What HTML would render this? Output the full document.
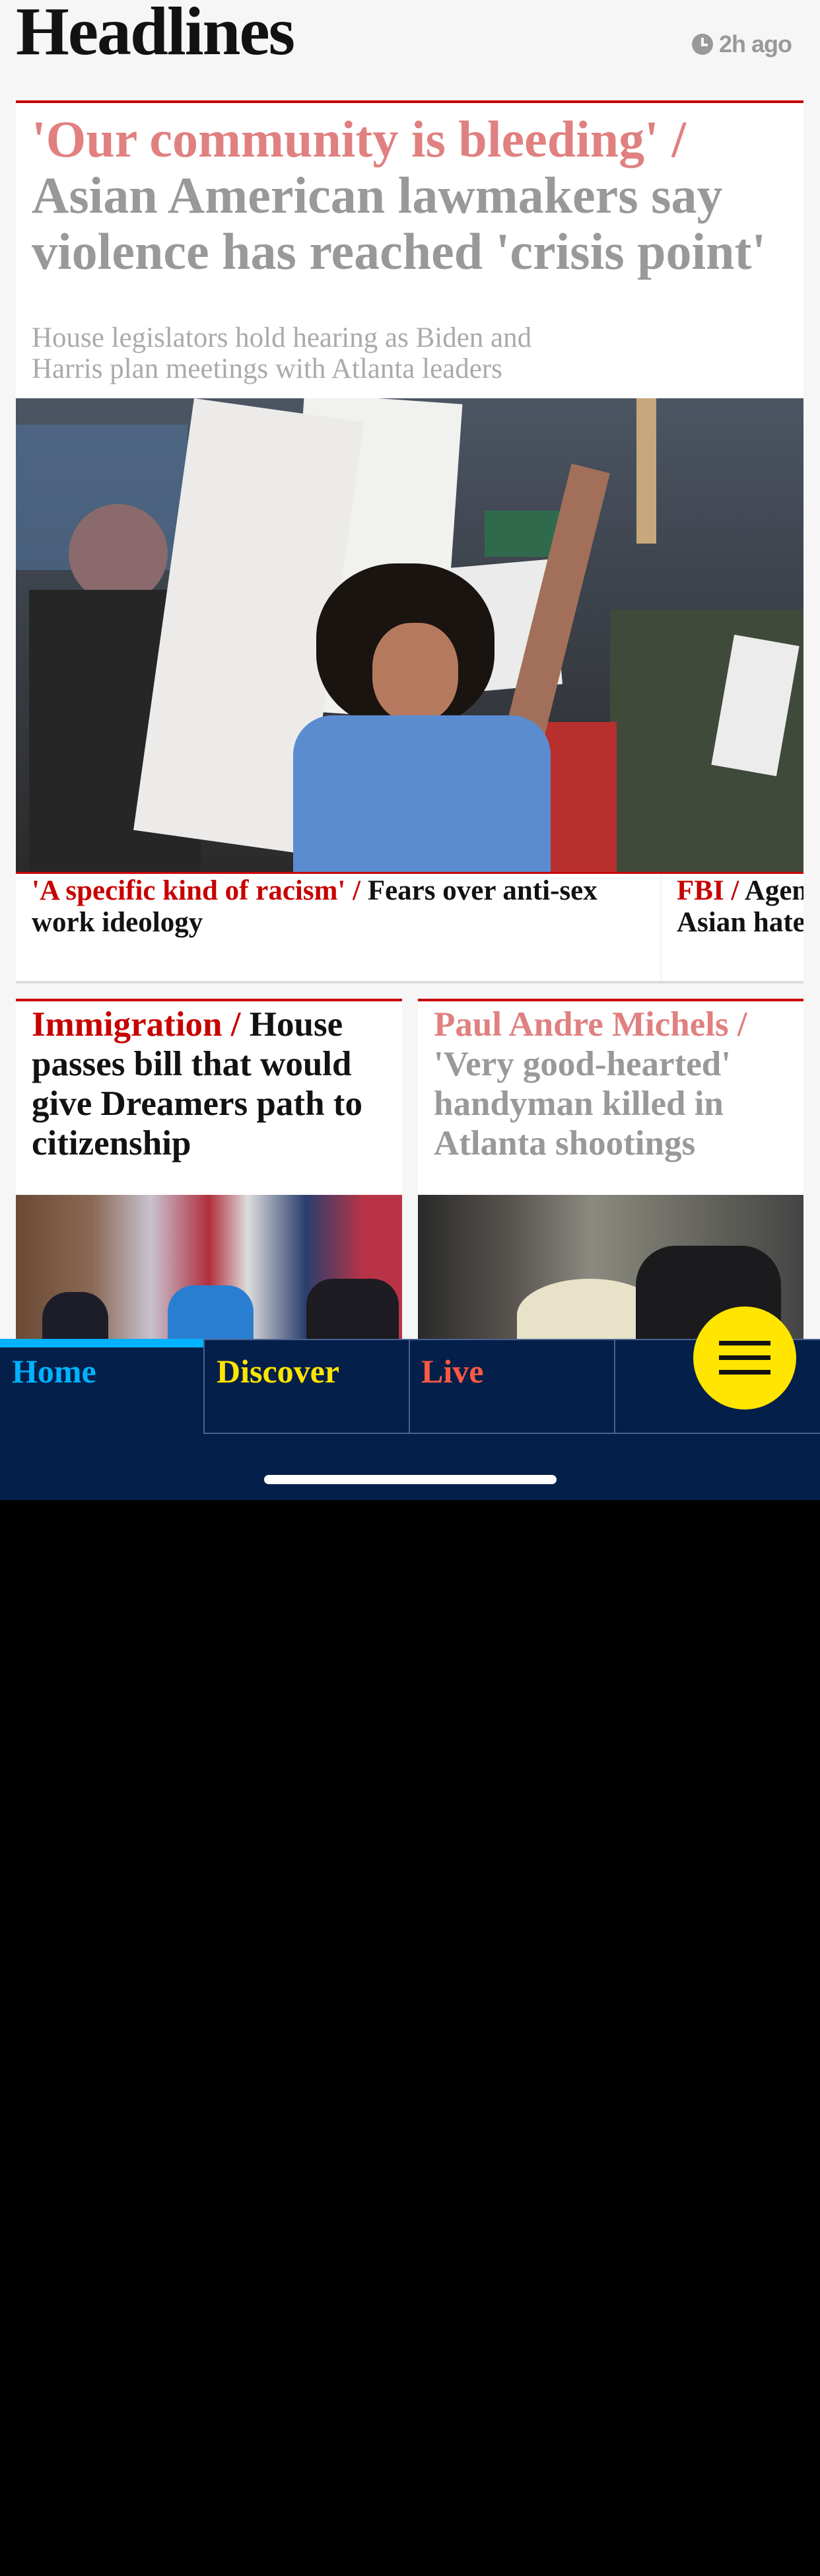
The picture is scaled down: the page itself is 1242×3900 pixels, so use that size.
<!DOCTYPE html>
<html><head><meta charset="utf-8"><style>
*{margin:0;padding:0;box-sizing:border-box}
html,body{width:1242px;height:3900px;background:#000;overflow:hidden}
#app{position:absolute;left:0;top:0;width:1242px;height:2271px;background:#f6f6f6;overflow:hidden;font-family:"Liberation Serif",serif}
.abs{position:absolute}
h1{position:absolute;left:24px;top:-12px;font-size:104px;font-weight:bold;color:#121212;letter-spacing:-2px}
.time{position:absolute;left:1047px;top:46px;font-family:"Liberation Sans",sans-serif;font-weight:bold;font-size:36px;color:#999;letter-spacing:-1px}
.card{position:absolute;background:#fff;border-top:4px solid #c70000;overflow:hidden}
.hl{font-weight:bold;white-space:nowrap}
</style></head><body>
<div id="app">
<h1>Headlines</h1>
<div class="time"><svg width="34" height="34" viewBox="0 0 34 34" style="vertical-align:-5px;margin-right:8px"><circle cx="17" cy="17" r="16" fill="#999"/><path d="M17 7v11h8" stroke="#f6f6f6" stroke-width="4" fill="none"/></svg>2h ago</div>

<div class="card" style="left:24px;top:152px;width:1193px;height:460px">
 <div class="hl" style="position:absolute;left:24px;top:12px;font-size:78px;line-height:85px;color:#999">
  <span style="color:#e08080">'Our community is bleeding' /</span><br>Asian American lawmakers say<br>violence has reached 'crisis point'</div>
 <div style="position:absolute;left:24px;top:332px;font-size:43px;line-height:47px;color:#aaa;white-space:nowrap">House legislators hold hearing as Biden and<br>Harris plan meetings with Atlanta leaders</div>
</div>

<!-- main image -->
<div class="abs" style="left:24px;top:603px;width:1193px;height:718px;overflow:hidden;background:linear-gradient(180deg,#4c5563 0%,#3d434c 40%,#2a2a2a 100%)">
 <div class="abs" style="left:0;top:40px;width:260px;height:220px;background:#50739a;opacity:.6"></div>
 <div class="abs" style="left:900px;top:320px;width:300px;height:400px;background:#3f4a3a"></div>
 <div class="abs" style="left:80px;top:160px;width:150px;height:150px;border-radius:50%;background:#8a6a6c"></div>
 <div class="abs" style="left:20px;top:290px;width:260px;height:430px;background:#262626"></div>
 <div class="abs" style="left:420px;top:0;width:240px;height:480px;background:#f1f1ef;transform:rotate(4deg)"></div>
 <div class="abs" style="top:0;width:260px;height:660px;background:#ecebea;transform:rotate(8deg);transform-origin:top left;left:270px"></div>
 <div class="abs" style="left:660px;top:250px;width:160px;height:190px;background:#ebebeb;transform:rotate(-5deg)"></div>
 <div class="abs" style="left:710px;top:170px;width:140px;height:70px;background:#2f6a4c"></div>
 <div class="abs" style="left:1070px;top:365px;width:100px;height:200px;background:#ececec;transform:rotate(10deg)"></div>
 <div class="abs" style="left:760px;top:490px;width:150px;height:230px;background:#b8302e"></div>
 <div class="abs" style="left:455px;top:250px;width:270px;height:250px;border-radius:45%;background:#1a1411"></div>
 <div class="abs" style="left:540px;top:340px;width:130px;height:150px;border-radius:45%;background:#b57a5e"></div>
 <div class="abs" style="left:790px;top:100px;width:60px;height:420px;background:#a2705a;transform:rotate(14deg)"></div>
 <div class="abs" style="left:940px;top:0;width:30px;height:220px;background:#c7a77c"></div>
 <div class="abs" style="left:420px;top:480px;width:390px;height:240px;background:#5b8ccf;border-radius:60px 60px 0 0"></div>
</div>
<div class="abs" style="left:24px;top:1320px;width:1193px;height:3px;background:#c70000"></div>

<div class="abs" style="left:24px;top:1323px;width:976px;height:162px;background:#fff"></div>
<div class="abs" style="left:1003px;top:1323px;width:214px;height:162px;background:#fff;overflow:hidden">
 <div class="hl" style="position:absolute;left:22px;top:2px;font-size:43px;line-height:48px;color:#121212"><span style="color:#c70000">FBI /</span> Agency<br>Asian hate</div></div>
<div class="hl" style="position:absolute;left:48px;top:1325px;font-size:43px;line-height:48px;color:#121212"><span style="color:#c70000">'A specific kind of racism' /</span> Fears over anti-sex<br>work ideology</div>
<div class="abs" style="left:24px;top:1485px;width:1193px;height:4px;background:#dcdcdc"></div>

<div class="card" style="left:24px;top:1512px;width:585px;height:520px">
 <div class="hl" style="position:absolute;left:24px;top:5px;font-size:53px;line-height:60px;color:#121212"><span style="color:#c70000">Immigration /</span> House<br>passes bill that would<br>give Dreamers path to<br>citizenship</div>
 <div class="abs" style="left:0;top:293px;width:585px;height:230px;background:linear-gradient(90deg,#6a4a35 0%,#8b6a55 20%,#c8c2cf 35%,#b02f3c 50%,#ddd 60%,#2a3f6e 75%,#b83346 90%)"></div>
 <div class="abs" style="left:230px;top:430px;width:130px;height:100px;background:#2a7ed1;border-radius:40px 40px 0 0"></div>
 <div class="abs" style="left:440px;top:420px;width:140px;height:100px;background:#1c1c22;border-radius:40px 40px 0 0"></div>
 <div class="abs" style="left:40px;top:440px;width:100px;height:90px;background:#1d1d2a;border-radius:40px 40px 0 0"></div>
</div>
<div class="card" style="left:633px;top:1512px;width:584px;height:520px">
 <div class="hl" style="position:absolute;left:24px;top:5px;font-size:53px;line-height:60px;color:#999"><span style="color:#e08080">Paul Andre Michels /</span><br>'Very good-hearted'<br>handyman killed in<br>Atlanta shootings</div>
 <div class="abs" style="left:0;top:293px;width:584px;height:230px;background:linear-gradient(90deg,#2a2a2a 0%,#5a5550 25%,#8a8a80 45%,#6a6a62 70%,#444 100%)"></div>
 <div class="abs" style="left:150px;top:420px;width:220px;height:110px;background:#e7e2c8;border-radius:50% 50% 0 0"></div>
 <div class="abs" style="left:330px;top:370px;width:220px;height:160px;background:#1b1b1d;border-radius:60px 60px 0 0"></div>
</div>

<!-- nav -->
<div class="abs" style="left:0;top:2027px;width:1242px;height:244px;background:#041f4a">
 <div class="abs" style="left:0;top:0;width:308px;height:13px;background:#00b2ff"></div>
 <div class="abs" style="left:308px;top:0;width:2px;height:143px;background:#4a6290"></div>
 <div class="abs" style="left:619px;top:0;width:2px;height:143px;background:#4a6290"></div>
 <div class="abs" style="left:930px;top:0;width:2px;height:143px;background:#4a6290"></div>
 <div class="abs" style="left:308px;top:142px;width:934px;height:2px;background:#4a6290"></div>
 <div class="abs" style="left:310px;top:0;width:932px;height:2px;background:#4a6290"></div>
 <div class="hl abs" style="left:18px;top:20px;font-size:50px;color:#00b2ff">Home</div>
 <div class="hl abs" style="left:328px;top:20px;font-size:50px;color:#ffe500">Discover</div>
 <div class="hl abs" style="left:638px;top:20px;font-size:50px;color:#ff5943">Live</div>
 <div class="abs" style="left:400px;top:206px;width:443px;height:14px;border-radius:7px;background:#fff"></div>
</div>
<div class="abs" style="left:1050px;top:1978px;width:156px;height:156px;border-radius:50%;background:#ffe500">
 <div class="abs" style="left:39px;top:52px;width:78px;height:7px;background:#121212"></div>
 <div class="abs" style="left:39px;top:74px;width:78px;height:7px;background:#121212"></div>
 <div class="abs" style="left:39px;top:96px;width:78px;height:7px;background:#121212"></div>
</div>
</div>
</body></html>
